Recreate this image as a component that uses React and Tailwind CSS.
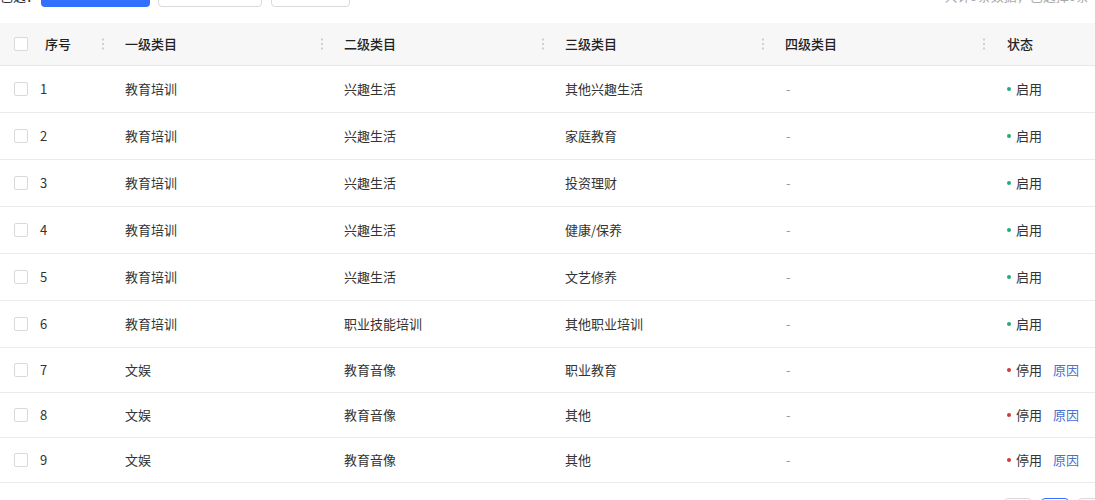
import React from "react";

const rows = [
  { id: 1, l1: "教育培训", l2: "兴趣生活", l3: "其他兴趣生活", on: true },
  { id: 2, l1: "教育培训", l2: "兴趣生活", l3: "家庭教育", on: true },
  { id: 3, l1: "教育培训", l2: "兴趣生活", l3: "投资理财", on: true },
  { id: 4, l1: "教育培训", l2: "兴趣生活", l3: "健康/保养", on: true },
  { id: 5, l1: "教育培训", l2: "兴趣生活", l3: "文艺修养", on: true },
  { id: 6, l1: "教育培训", l2: "职业技能培训", l3: "其他职业培训", on: true },
  { id: 7, l1: "文娱", l2: "教育音像", l3: "职业教育", on: false },
  { id: 8, l1: "文娱", l2: "教育音像", l3: "其他", on: false },
  { id: 9, l1: "文娱", l2: "教育音像", l3: "其他", on: false },
];

function Checkbox() {
  return <span className="block w-[14px] h-[14px] rounded-[2px] border border-[#d9d9d9] bg-white" />;
}

function Grip() {
  return (
    <svg width="2" height="12" viewBox="0 0 2 12" className="shrink-0">
      <rect x="0" y="0.5" width="2" height="2" fill="#cfcfcf" />
      <rect x="0" y="5" width="2" height="2" fill="#cfcfcf" />
      <rect x="0" y="9.5" width="2" height="2" fill="#cfcfcf" />
    </svg>
  );
}

export default function App() {
  return (
    <div
      className="w-[1095px] h-[500px] overflow-hidden bg-white text-[13px] text-[#333]"
      style={{ fontFamily: '"Microsoft YaHei", "Noto Sans CJK SC", "Noto Sans", sans-serif' }}
    >
      {/* toolbar, mostly scrolled off the top */}
      <div className="flex items-center justify-between h-[32px] -mt-[25px]">
        <div className="flex items-center">
          <span className="w-[41px] leading-[20px] mt-[10px] text-[#333]">已选：</span>
          <button className="h-[32px] w-[109px] rounded-[4px] bg-[#3370ff] text-white">新增类目</button>
          <button className="ml-[8px] h-[32px] w-[104px] rounded-[4px] border border-[#d9d9d9] bg-white">批量启用</button>
          <button className="ml-[9px] h-[32px] w-[79px] rounded-[4px] border border-[#d9d9d9] bg-white">导出</button>
        </div>
        <span className="pr-[6px] leading-[20px] mt-[10px] text-[#aaa]">共计9条数据，已选择0条</span>
      </div>

      {/* table */}
      <div className="mt-[16px]">
        <div className="flex h-[43px] items-center bg-[#f7f7f7] border-b border-[#e8e8e8] font-medium text-[#222]">
          <div className="w-[35px] pl-[14px]"><Checkbox /></div>
          <div className="w-[69px] flex items-center justify-between pl-[10px]">序号<Grip /></div>
          <div className="w-[219px] flex items-center justify-between pl-[21px]">一级类目<Grip /></div>
          <div className="w-[221px] flex items-center justify-between pl-[21px]">二级类目<Grip /></div>
          <div className="w-[220px] flex items-center justify-between pl-[21px]">三级类目<Grip /></div>
          <div className="w-[221px] flex items-center justify-between pl-[21px]">四级类目<Grip /></div>
          <div className="w-[110px] pl-[22px]">状态</div>
        </div>

        {rows.map((r) => (
          <div
            key={r.id}
            className={`flex items-center border-b border-[#ebebeb] ${r.on ? "h-[47px]" : "h-[45px]"}`}
          >
            <div className="w-[35px] pl-[14px]"><Checkbox /></div>
            <div className="w-[69px] pl-[5px]">{r.id}</div>
            <div className="w-[219px] pl-[21px]">{r.l1}</div>
            <div className="w-[221px] pl-[21px]">{r.l2}</div>
            <div className="w-[220px] pl-[21px]">{r.l3}</div>
            <div className="w-[221px] pl-[22px] text-[#999]">-</div>
            <div className="w-[110px] pl-[22px] flex items-center">
              <span className={`w-[4px] h-[4px] rounded-full ${r.on ? "bg-[#1fae7a]" : "bg-[#d03a3a]"}`} />
              <span className="ml-[5px]">{r.on ? "启用" : "停用"}</span>
              {!r.on && <span className="ml-[11px] text-[#4b6fd0]">原因</span>}
            </div>
          </div>
        ))}
      </div>

      {/* pagination peeking at the bottom */}
      <div className="flex justify-end gap-[9px] mt-[15px]">
        <span className="w-[28px] h-[28px] rounded-[4px] border border-[#d9d9d9]" />
        <span className="w-[28px] h-[28px] rounded-[4px] border border-[#3370ff]" />
        <span className="w-[28px] h-[28px] rounded-[4px] border border-[#d9d9d9] -mr-[11px]" />
      </div>
    </div>
  );
}
